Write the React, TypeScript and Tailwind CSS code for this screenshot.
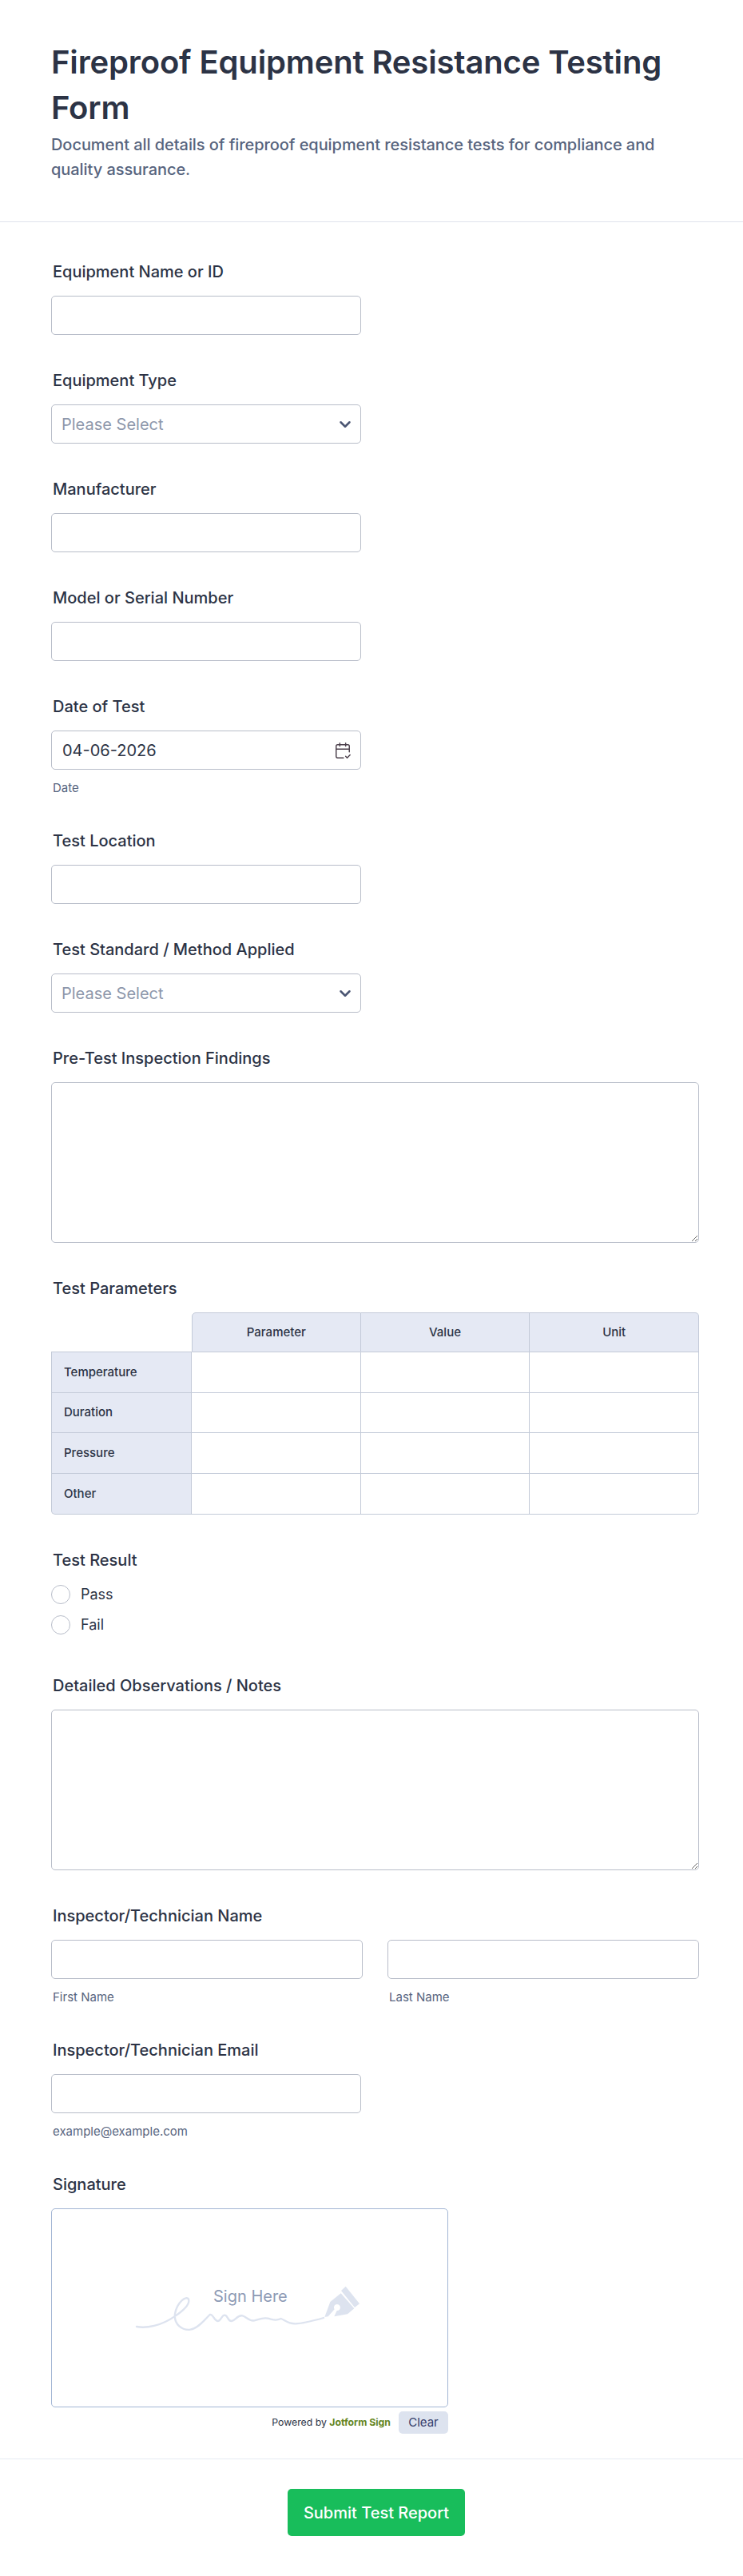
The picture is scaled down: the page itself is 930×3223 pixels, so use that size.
import { CalendarCheck2, ChevronDown } from "lucide-react";
import type { ReactNode } from "react";

const inputClass = "block h-[49px] w-full rounded-[5px] border border-[#b8bdc9] bg-white px-3.5 text-xl text-[#2c3345]";

function Label({ children }: { children: ReactNode }) {
    return <div className="ml-0.5 h-6 text-xl leading-6 font-medium text-[#2c3345]">{children}</div>;
}

function SubLabel({ children }: { children: ReactNode }) {
    return <div className="mt-[14px] ml-0.5 text-[15px] leading-[18px] text-[#57647e]">{children}</div>;
}

function TextField({ label, sub }: { label: string, sub?: string }) {
    return (
        <div className="flex flex-col">
            <Label>{label}</Label>
            <input type="text" className={`${inputClass} mt-[18px] max-w-[388px]`} />
            {sub && <SubLabel>{sub}</SubLabel>}
        </div>
    );
}

function SelectField({ label }: { label: string }) {
    return (
        <div className="flex flex-col">
            <Label>{label}</Label>
            <div className="mt-[18px] flex h-[49px] w-[388px] items-center justify-between rounded-[5px] border border-[#b8bdc9] bg-white pr-2 pl-3">
                <span className="text-xl text-[#8d97ab]">Please Select</span>
                <ChevronDown size={22} strokeWidth={2.75} className="text-[#4b5673]" />
            </div>
        </div>
    );
}

function TextareaField({ label }: { label: string }) {
    return (
        <div className="flex flex-col">
            <Label>{label}</Label>
            <textarea className="mt-[18px] block h-[201px] w-[811px] rounded-[5px] border border-[#b8bdc9] bg-white" />
        </div>
    );
}

function ParametersTable() {
    const headers = ["Parameter", "Value", "Unit"];
    const rows = ["Temperature", "Duration", "Pressure", "Other"];
    return (
        <table className="mt-[18px] w-[811px] table-fixed border-separate border-spacing-0 text-[15px] font-medium text-[#2c3345]">
            <thead>
                <tr className="h-[50px]">
                    <th className="w-[176px] border-b border-[#c3cad8]" />
                    {headers.map((h, i) => (
                        <th key={h} className={`border-t border-r border-b border-[#c3cad8] bg-[#e5e9f4] font-medium ${i === 0 ? "rounded-tl-[5px] border-l" : ""} ${i === 2 ? "rounded-tr-[5px]" : ""}`}>{h}</th>
                    ))}
                </tr>
            </thead>
            <tbody>
                {rows.map((r, ri) => (
                    <tr key={r} className={ri === 1 ? "h-[50px]" : "h-[51px]"}>
                        <th className={`border-r border-b border-l border-[#c3cad8] bg-[#e5e9f4] pl-[15px] text-left font-medium ${ri === 3 ? "rounded-bl-[5px]" : ""}`}>{r}</th>
                        {headers.map((h, i) => (
                            <td key={h} className={`border-r border-b border-[#c3cad8] ${ri === 3 && i === 2 ? "rounded-br-[5px]" : ""}`} />
                        ))}
                    </tr>
                ))}
            </tbody>
        </table>
    );
}

function Radio({ label }: { label: string }) {
    return (
        <div className="flex h-[38px] items-center gap-[13px]">
            <span className="size-6 rounded-full border border-[#b8bdc9]" />
            <span className="text-lg text-[#2c3345]">{label}</span>
        </div>
    );
}

function SignatureArt() {
    return (
        <svg width="320" height="130" viewBox="0 0 960 390" fill="none">
            <path
                d="M93 243 C130 250 185 240 235 205 C265 185 295 160 288 140 C280 125 245 150 237 195 C232 235 265 258 295 254 C325 250 350 215 368 198 C380 195 385 222 398 222 C410 222 412 198 425 200 C437 203 435 224 450 222 C465 220 472 198 490 202 C505 205 515 224 535 220 C550 217 565 208 585 212 C605 216 615 222 635 213 C650 218 660 233 690 232 C720 231 760 220 795 210"
                stroke="#dde3ef" strokeWidth="7" strokeLinecap="round"
            />
            <path d="M861 108 L878 92 L930 157 L912 171 Z" fill="#dde3ef" />
            <path fillRule="evenodd" clipRule="evenodd" d="M799 207 L820 150 L860 118 L910 175 L885 196 L835 205 L845 183 A12 12 0 1 0 836 178 L812 205 Z" fill="#dde3ef" />
        </svg>
    );
}

function SignatureField() {
    return (
        <div className="flex flex-col">
            <Label>Signature</Label>
            <div className="mt-[18px] flex w-[497px] flex-col items-end">
                <div className="relative h-[249px] w-full rounded-[5px] border border-[#a3b6d4] bg-white pt-[66px] pl-[75px]">
                    <SignatureArt />
                    <span className="absolute top-[95px] left-[202px] text-xl text-[#8d9ab5]">Sign Here</span>
                </div>
                <div className="mt-[5px] flex items-center gap-[10px]">
                    <span className="text-[12.25px] text-[#2c3345]">Powered by <b className="font-bold text-[#64861f]">Jotform Sign</b></span>
                    <span className="flex h-7 w-[62px] items-center justify-center rounded-[5px] bg-[#dde3ef] text-[15px] text-[#343c6a]">Clear</span>
                </div>
            </div>
        </div>
    );
}

export default function App() {
    return (
        <div className="min-h-[3223px] w-[930px] bg-white font-['Inter',sans-serif]">
            <header className="h-[278px] border-b border-[#dfe3ec] px-16 pt-[49px]">
                <h1 className="text-[40px] leading-[57px] font-semibold tracking-[-0.15px] text-[#2c3345]">Fireproof Equipment Resistance Testing Form</h1>
                <p className="mt-[3px] text-xl leading-[31px] font-medium tracking-[-0.06px] text-[#57647e]">Document all details of fireproof equipment resistance tests for compliance and quality assurance.</p>
            </header>
            <main className="flex flex-col gap-[45px] px-16 pt-[50px]">
                <TextField label="Equipment Name or ID" />
                <SelectField label="Equipment Type" />
                <TextField label="Manufacturer" />
                <TextField label="Model or Serial Number" />
                <div className="flex flex-col">
                    <Label>Date of Test</Label>
                    <div className="mt-[18px] flex h-[49px] w-[388px] items-center justify-between rounded-[5px] border border-[#b8bdc9] bg-white pr-[11px] pl-[13px]">
                        <span className="text-xl text-[#2c3345]">04-06-2026</span>
                        <CalendarCheck2 size={22} strokeWidth={1.6} className="text-[#4c404c]" />
                    </div>
                    <SubLabel>Date</SubLabel>
                </div>
                <TextField label="Test Location" />
                <SelectField label="Test Standard / Method Applied" />
                <TextareaField label="Pre-Test Inspection Findings" />
                <div className="flex flex-col">
                    <Label>Test Parameters</Label>
                    <ParametersTable />
                </div>
                <div className="flex flex-col">
                    <Label>Test Result</Label>
                    <div className="mt-[12px] flex flex-col">
                        <Radio label="Pass" />
                        <Radio label="Fail" />
                    </div>
                </div>
                <TextareaField label="Detailed Observations / Notes" />
                <div className="flex flex-col">
                    <Label>Inspector/Technician Name</Label>
                    <div className="mt-[18px] flex w-[811px] gap-[31px]">
                        <div className="w-[390px]">
                            <input type="text" className={inputClass} />
                            <SubLabel>First Name</SubLabel>
                        </div>
                        <div className="w-[390px]">
                            <input type="text" className={inputClass} />
                            <SubLabel>Last Name</SubLabel>
                        </div>
                    </div>
                </div>
                <TextField label="Inspector/Technician Email" sub="example@example.com" />
                <SignatureField />
            </main>
            <footer className="mt-[31px] flex justify-center border-t border-[#e6eaf2] pt-[37px]">
                <button className="ml-[12px] h-[59px] w-[222px] rounded-[5px] bg-[#18bd5b] text-xl font-medium text-white">Submit Test Report</button>
            </footer>
        </div>
    );
}
